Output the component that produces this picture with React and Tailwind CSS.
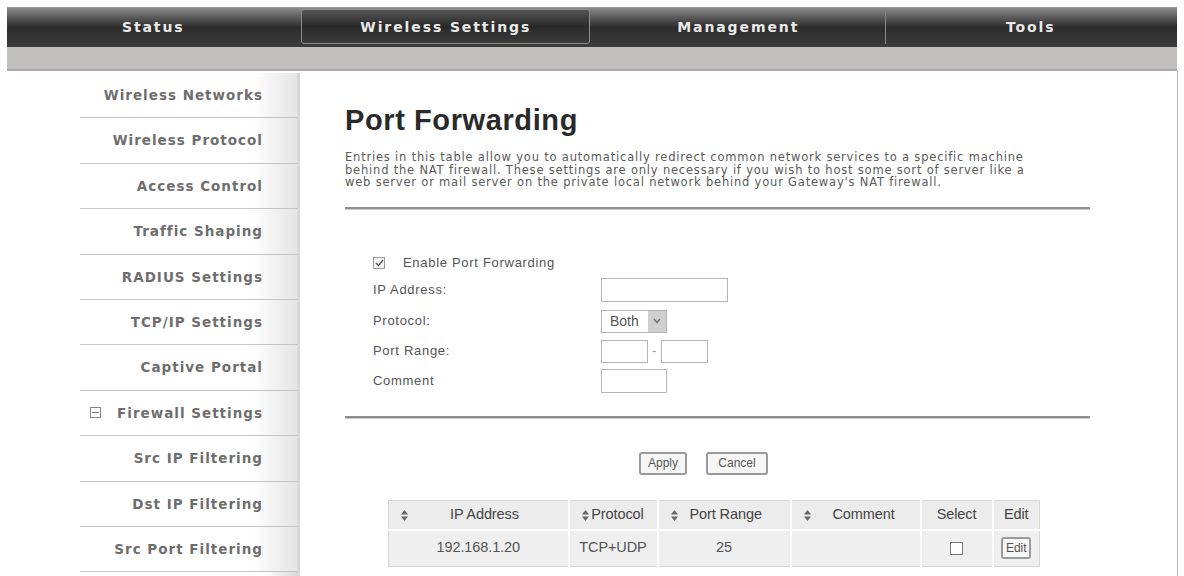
import React from "react";

const tabs = ["Status", "Wireless Settings", "Management", "Tools"];

const menu = [
  "Wireless Networks",
  "Wireless Protocol",
  "Access Control",
  "Traffic Shaping",
  "RADIUS Settings",
  "TCP/IP Settings",
  "Captive Portal",
  "Firewall Settings",
  "Src IP Filtering",
  "Dst IP Filtering",
  "Src Port Filtering",
];

const SortIcon = () => (
  <svg width="7" height="11" viewBox="0 0 7 11" className="inline-block">
    <path d="M3.5 0 L7 4.5 L0 4.5 Z" fill="#666" />
    <path d="M3.5 11 L7 6.5 L0 6.5 Z" fill="#666" />
  </svg>
);

const App = () => {
  return (
    <div className="w-[1184px] h-[576px] overflow-hidden bg-white relative font-['Liberation_Sans',Arial,sans-serif]">
      {/* top navigation */}
      <div className="ml-[7px] mr-[7px] mt-[7px] h-[40px] grid grid-cols-4 bg-gradient-to-b from-[#8a8a8a] via-[#2c2c2c] to-[#3d3d3d] border-t border-[#999]">
        {tabs.map((t, i) => (
          <div key={t} className="relative flex items-center justify-center">
            {i === 1 && (
              <div className="absolute left-[1px] right-[2px] top-[1px] bottom-[3px] rounded-[3px] border border-[#8c8c8c] bg-gradient-to-b from-[#555] via-[#2a2a2a] to-[#3a3a3a]" />
            )}
            {i === 3 && <div className="absolute left-0 top-[2px] bottom-[3px] w-px bg-[#8a8a8a]" />}
            <span className="relative text-[14px] font-bold tracking-[1.9px] text-[#e9e9e9] font-['DejaVu_Sans',sans-serif]">
              {t}
            </span>
          </div>
        ))}
      </div>
      <div className="ml-[7px] mr-[7px] h-[24px] bg-[#c1bebe] border-b-2 border-[#a9a7a7]" />

      <div className="flex">
        {/* sidebar */}
        <div className="ml-[8px] mt-[2px] w-[292px] h-[510px] bg-gradient-to-r from-white via-white via-[88%] to-[#d6d6d6]">
          {menu.map((m, i) => (
            <div
              key={m}
              className="h-[45.4px] flex items-center justify-end pr-[34px] ml-[72px] mr-[3px] border-b border-[#c4c4c4] bg-gradient-to-r from-white via-white via-[80%] to-[#e4e4e4]"
            >
              {i === 7 && (
                <span className="mr-auto ml-[10px] w-[11px] h-[11px] border border-[#888] flex items-center justify-center">
                  <span className="w-[7px] h-px bg-[#777]" />
                </span>
              )}
              <span className="text-[13.5px] font-bold tracking-[1px] text-[#6e6e6e] font-['DejaVu_Sans',sans-serif]">
                {m}
              </span>
            </div>
          ))}
        </div>

        {/* main */}
        <div className="ml-[45px] w-[745px]">
          <h1 className="mt-[32px] text-[29px] leading-[34px] font-bold text-[#2a2a2a] tracking-[0.6px]">
            Port Forwarding
          </h1>
          <p className="mt-[14px] text-[11.5px] leading-[12.5px] tracking-[0.8px] text-[#5a5a5a] font-['DejaVu_Sans',sans-serif] whitespace-nowrap">
            Entries in this table allow you to automatically redirect common network services to a specific machine
            <br />
            behind the NAT firewall. These settings are only necessary if you wish to host some sort of server like a
            <br />
            web server or mail server on the private local network behind your Gateway's NAT firewall.
          </p>
          <div className="mt-[18px] h-[3px] bg-[#8e8e8e] border-b border-[#c8c8c8]" />

          <div className="ml-[28px] mt-[42px] text-[13px] text-[#555] tracking-[0.7px]">
            <div className="flex items-center h-[22px]">
              <span className="w-[12px] h-[12px] border border-[#999] bg-[#f4f4f4] flex items-center justify-center">
                <svg width="9" height="8" viewBox="0 0 9 8">
                  <path d="M1 4 L3.5 6.5 L8 1" stroke="#555" strokeWidth="1.4" fill="none" />
                </svg>
              </span>
              <span className="ml-[18px]">Enable Port Forwarding</span>
            </div>
            <div className="flex items-center h-[29px] mt-[2px]">
              <span className="w-[228px]">IP Address:</span>
              <span className="w-[127px] h-[24px] border border-[#b5b5b5]" />
            </div>
            <div className="flex items-center h-[33px]">
              <span className="w-[228px]">Protocol:</span>
              <span className="w-[66px] h-[23px] border border-[#b5b5b5] flex items-center">
                <span className="pl-[8px] flex-1 text-[14px] text-[#555] tracking-normal">Both</span>
                <span className="w-[18px] h-[21px] bg-[#cfcfcf] flex items-center justify-center">
                  <svg width="8" height="6" viewBox="0 0 8 6">
                    <path d="M1 1 L4 4.5 L7 1" stroke="#777" strokeWidth="1.6" fill="none" />
                  </svg>
                </span>
              </span>
            </div>
            <div className="flex items-center h-[27px]">
              <span className="w-[228px]">Port Range:</span>
              <span className="w-[47px] h-[23px] border border-[#b5b5b5]" />
              <span className="ml-[4px] mr-[4px] text-[#999]">-</span>
              <span className="w-[47px] h-[23px] border border-[#b5b5b5]" />
            </div>
            <div className="flex items-center h-[32px]">
              <span className="w-[228px]">Comment</span>
              <span className="w-[66px] h-[24px] border border-[#b5b5b5]" />
            </div>
          </div>
          <div className="mt-[19px] h-[3px] bg-[#8e8e8e] border-b border-[#c8c8c8]" />

          <div className="mt-[33px] flex items-center gap-[19px] ml-[294px] text-[12px] text-[#555]">
            <span className="w-[48px] h-[23px] border-2 border-[#9a9a9a] rounded-[3px] bg-[#f6f6f6] flex items-center justify-center">
              Apply
            </span>
            <span className="w-[62px] h-[23px] border-2 border-[#9a9a9a] rounded-[3px] bg-[#f6f6f6] flex items-center justify-center">
              Cancel
            </span>
          </div>

          <table className="mt-[25px] ml-[43px] w-[652px] border border-[#d8d8d8] border-collapse text-[14.5px] text-[#444] tracking-[-0.1px]">
            <thead>
              <tr className="h-[30px] bg-[#ececec]">
                <th className="w-[180px] font-normal border-r-2 border-b-2 border-white">
                  <div className="flex items-center">
                    <span className="ml-[12px]"><SortIcon /></span>
                    <span className="ml-[42px]">IP Address</span>
                  </div>
                </th>
                <th className="w-[89px] font-normal border-r-2 border-b-2 border-white">
                  <span className="mr-[2px]"><SortIcon /></span>Protocol
                </th>
                <th className="w-[133px] font-normal border-r-2 border-b-2 border-white">
                  <div className="flex items-center">
                    <span className="ml-[12px]"><SortIcon /></span>
                    <span className="ml-[12px]">Port Range</span>
                  </div>
                </th>
                <th className="w-[130px] font-normal border-r-2 border-b-2 border-white">
                  <div className="flex items-center">
                    <span className="ml-[12px]"><SortIcon /></span>
                    <span className="ml-[22px]">Comment</span>
                  </div>
                </th>
                <th className="w-[72px] font-normal border-r-2 border-b-2 border-white">Select</th>
                <th className="font-normal border-b-2 border-white">Edit</th>
              </tr>
            </thead>
            <tbody>
              <tr className="h-[36px] bg-[#efefef] text-[#555]">
                <td className="text-center border-r-2 border-white">192.168.1.20</td>
                <td className="text-center border-r-2 border-white">TCP+UDP</td>
                <td className="text-center border-r-2 border-white">25</td>
                <td className="border-r-2 border-white" />
                <td className="border-r-2 border-white">
                  <div className="flex justify-center">
                    <span className="w-[13px] h-[13px] border border-[#777] bg-white" />
                  </div>
                </td>
                <td>
                  <div className="flex justify-center">
                    <span className="px-[3px] h-[22px] border-2 border-[#9a9a9a] rounded-[3px] bg-[#f6f6f6] text-[12px] flex items-center">
                      Edit
                    </span>
                  </div>
                </td>
              </tr>
            </tbody>
          </table>
        </div>
      </div>
      <div className="absolute right-[6px] top-[71px] w-px h-[505px] bg-[#bbb]" />
    </div>
  );
};

export default App;
